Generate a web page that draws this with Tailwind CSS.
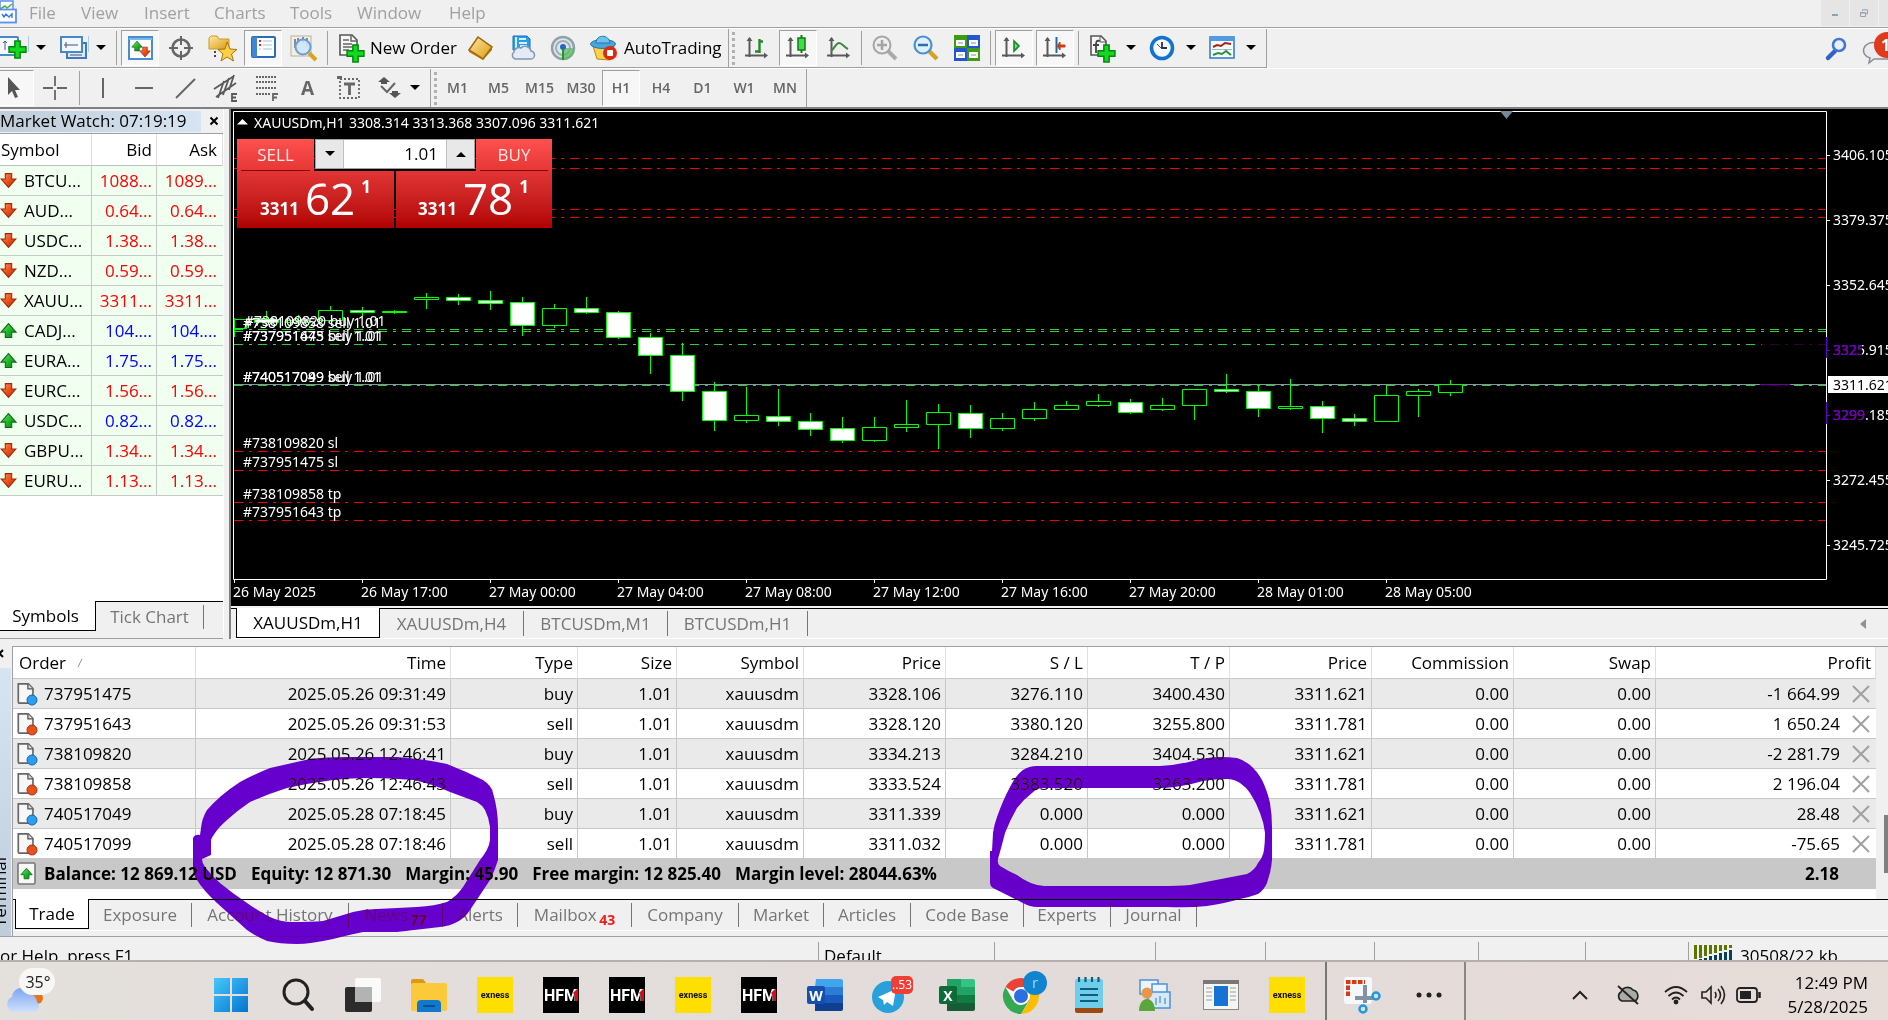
<!DOCTYPE html>
<html lang="en">
<head>
<meta charset="utf-8">
<title>XAUUSDm,H1</title>
<script src="https://cdn.jsdelivr.net/npm/@tailwindcss/browser@4"></script>
</head>
<body class="relative flex h-screen flex-col overflow-hidden bg-[#f0f0f0] font-['Open_Sans','Noto_Sans',sans-serif] text-[17px] leading-6 text-black">

<svg class="absolute h-0 w-0" aria-hidden="true">
  <defs>
    <linearGradient id="gGold" x1="0" y1="0" x2="1" y2="1"><stop offset="0" stop-color="#ffe9a0"/><stop offset="1" stop-color="#d99a13"/></linearGradient>
    <linearGradient id="gWin" x1="0" y1="0" x2="1" y2="1"><stop offset="0" stop-color="#45c8fb"/><stop offset="1" stop-color="#0573d0"/></linearGradient>
    <linearGradient id="gCloud" x1="0" y1="0" x2="0" y2="1"><stop offset="0" stop-color="#7fa6f3"/><stop offset="1" stop-color="#cfe0fb"/></linearGradient>
    <linearGradient id="gRed" x1="0" y1="0" x2="1" y2="1"><stop offset="0" stop-color="#ff9a66"/><stop offset=".5" stop-color="#ea4f1c"/><stop offset="1" stop-color="#b93208"/></linearGradient>
    <linearGradient id="gGreen" x1="0" y1="0" x2="1" y2="1"><stop offset="0" stop-color="#7be87b"/><stop offset=".5" stop-color="#25b52c"/><stop offset="1" stop-color="#0a7d12"/></linearGradient>
    <symbol id="down" viewBox="0 0 16 16"><path d="M5 1.500h6v5h4L8 14.500 1 6.500h4z" fill="url(#gRed)" stroke="#9c2c08"/></symbol>
    <symbol id="up" viewBox="0 0 16 16"><path d="M5 14.500h6v-5h4L8 1.500 1 9.500h4z" fill="url(#gGreen)" stroke="#0a6d10"/></symbol>
    <symbol id="doc" viewBox="0 0 24 26"><path d="M2.500 2h11l5 5v16H4q-1.500 0-1.500-1.500z" fill="#f7f7f7" stroke="#666" stroke-width="1.800"/><path d="M13 2v5.500h5.500" fill="#ddd" stroke="#555" stroke-width="1.400"/></symbol>
    <symbol id="plus" viewBox="0 0 18 18"><path d="M6.500 1h5v5.500H17v5h-5.500V17h-5v-5.500H1v-5h5.500z" fill="#12d921" stroke="#05860d" stroke-width="1.400"/></symbol>
    <symbol id="axes" viewBox="0 0 26 26"><path d="M5.500 3v19M1 20.500h20" stroke="#5a5a5a" stroke-width="2" fill="none"/><path d="M2.500 6l3-4 3 4zM20 17.500l4 3-4 3z" fill="#5a5a5a"/></symbol>
    <symbol id="exness" viewBox="0 0 36 36"><rect width="36" height="36" fill="#ffde02"/><text x="18" y="20.500" font-size="9" font-weight="700" text-anchor="middle" fill="#111" font-family="Roboto, sans-serif">exness</text></symbol>
    <symbol id="hfm" viewBox="0 0 36 36"><rect width="36" height="36" fill="#000"/><text x="18" y="23.500" font-size="16" font-weight="700" text-anchor="middle" fill="#fff" font-family="Roboto, sans-serif">HFM</text><path d="M30 16l4-4h1v12h-3v-6z" fill="#e00613"/></symbol>
  </defs>
</svg>

<!-- Menu bar -->
<header class="flex h-7 shrink-0 items-center border-b border-[#a0a0a0] text-[#a0a0a0]">
  <svg class="h-7 w-[29px] shrink-0" viewBox="0 0 29 28" aria-hidden="true"><rect x="0" y="1" width="13" height="9" fill="#fff" stroke="#5b8ff0" stroke-width="1.500"/><path d="M0 9l5-3 2 2 5-4" stroke="#3fae4a" fill="none" stroke-width="1.500"/><rect x="-2" y="9.500" width="18" height="13" fill="#fff" stroke="#5b8ff0" stroke-width="1.800"/><path d="M2 14l2 3 2-3 3 3 3-3v4" stroke="#3b77e8" fill="none" stroke-width="1.400"/></svg>
  <nav class="flex flex-1 items-center pb-0.5">
    <a href="#" class="w-[52px]">File</a><a href="#" class="w-[63px]">View</a><a href="#" class="w-[70px]">Insert</a><a href="#" class="w-[76px]">Charts</a><a href="#" class="w-[67px]">Tools</a><a href="#" class="w-[92px]">Window</a><a href="#">Help</a>
  </nav>
  <div class="flex gap-px self-start">
    <button aria-label="Minimize" class="flex h-[26px] w-7 items-center justify-center bg-[#e5e5e5]"><span class="mt-1 h-0.5 w-1.5 bg-[#93a1b0]"></span></button>
    <button aria-label="Restore" class="flex h-[26px] w-7 items-center justify-center bg-[#e5e5e5]"><svg width="8" height="8" viewBox="0 0 8 8" fill="none" stroke="#93a1b0"><path d="M2.500 2V.8H7.500v4H6M.5 3.500h5v4h-5zM.5 4h5" /></svg></button>
    <button aria-label="Close" class="h-[26px] w-[9px] bg-[#e5e5e5]"></button>
  </div>
</header>

<!-- Standard toolbar -->
<div class="flex h-10 shrink-0 items-stretch justify-between border-t border-white">
  <div class="flex items-center border-r border-b border-[#a0a0a0] pr-1">
    <button aria-label="New chart" class="flex w-[53px] items-center"><svg width="31" height="28" viewBox="0 0 31 28"><rect x="-4" y="3" width="22" height="18" rx="1" fill="#f4f9ff" stroke="#4a86c8" stroke-width="2"/><path d="M5 7v9M3 9l2-2 2 2M8 14h6" stroke="#557" fill="none"/><use href="#plus" x="8" y="6" width="19" height="19"/><path d="M28.500 2v16" stroke="#a9cdf0"/></svg><svg width="20" height="10" viewBox="0 0 20 10"><path d="M5 2h10l-5 5z"/></svg></button>
    <button aria-label="Profiles" class="flex w-[60px] items-center"><svg width="38" height="28" viewBox="0 0 38 28"><rect x="14" y="9" width="19" height="15" fill="#dcebfb" stroke="#3f79bb" stroke-width="2"/><rect x="8" y="3" width="21" height="15" fill="#f3f8ff" stroke="#4a86c8" stroke-width="2"/><path d="M11 11h14M13 8v6M17 21h12" stroke="#456" fill="none"/><path d="M35.500 2v16" stroke="#a9cdf0"/></svg><svg width="20" height="10" viewBox="0 0 20 10"><path d="M5 2h10l-5 5z"/></svg></button>
    <span class="mr-1 ml-[3px] h-[34px] w-px bg-[#a0a0a0]"></span>
    <div class="flex gap-[3px]">
      <button aria-label="Market Watch" class="flex h-[36px] w-[38px] items-center justify-center border border-t-[#a0a0a0] border-r-white border-b-white border-l-[#a0a0a0] bg-[#f7f7f7]"><svg width="28" height="28" viewBox="0 0 28 28"><rect x="3" y="3" width="23" height="22" fill="#fff" stroke="#4a8cd0" stroke-width="2"/><path d="M3 5h23" stroke="#7ab8ee" stroke-width="2"/><use href="#up" x="5" y="6" width="12" height="12"/><use href="#down" x="13" y="12" width="12" height="12"/></svg></button>
      <button aria-label="Data Window" class="flex h-[36px] w-[38px] items-center justify-center"><svg width="28" height="28" viewBox="0 0 28 28" fill="none" stroke="#666"><circle cx="14" cy="14" r="8.500" stroke-width="2.600"/><path d="M14 2v9M14 17v9M2 14h9M17 14h9" stroke-width="2"/></svg></button>
      <button aria-label="Navigator" class="flex h-[36px] w-[38px] items-center justify-center"><svg width="30" height="28" viewBox="0 0 30 28"><path d="M2 4l2-2h6l2 3h10v10H2z" fill="url(#gGold)" stroke="#c99b2b"/><path d="M8 17v8" stroke="#444" stroke-width="2" stroke-dasharray="2 2"/><path d="M20 8l3 7 7 .5-5.500 4.500 2 7L20 23l-6 4 2-7-5-4.500 7-.5z" fill="#fccf45" stroke="#a9760a"/></svg></button>
      <button aria-label="Terminal" class="flex h-[36px] w-[38px] items-center justify-center border border-t-[#a0a0a0] border-r-white border-b-white border-l-[#a0a0a0] bg-[#f7f7f7]"><svg width="28" height="28" viewBox="0 0 28 28"><rect x="3" y="3" width="23" height="20" rx="1" fill="#fff" stroke="#2e6bb5" stroke-width="2"/><rect x="3" y="3" width="5" height="20" fill="#3f86d6"/><path d="M10 7h2M10 11h2" stroke="#d22" stroke-width="2"/><path d="M14 7h9M14 11h9M14 15h9M10 15h2" stroke="#c3d5ea" stroke-width="1.500"/></svg></button>
      <button aria-label="Strategy Tester" class="flex h-[36px] w-[38px] items-center justify-center"><svg width="30" height="28" viewBox="0 0 30 28"><rect x="2" y="2" width="20" height="20" fill="#f3efe2" stroke="#b9b29a"/><path d="M6 5v9M9 4v7M14 3v6M18 4v9" stroke="#667" stroke-width="1.500"/><circle cx="14" cy="13" r="7.500" fill="#cfe6fa" fill-opacity=".9" stroke="#6aa0d8" stroke-width="2"/><path d="M20 19l7 7" stroke="#d9a520" stroke-width="4"/></svg></button>
    </div>
    <span class="mx-1 h-[34px] w-px bg-[#a0a0a0]"></span>
    <button class="flex h-9 w-[129px] items-center gap-[5px] pl-1 text-left"><svg width="29" height="30" viewBox="0 0 29 30" class="shrink-0"><path d="M4 2h12l5 5v15H4z" fill="#f6f6f6" stroke="#555" stroke-width="1.600"/><path d="M15 2v6h6M7 7h6M7 11h9M7 14h9M7 17h6" stroke="#666" stroke-width="1.500" fill="none"/><use href="#plus" x="10" y="11" width="19" height="19"/></svg><span>New Order</span></button>
    <div class="flex gap-[3px] pl-px">
      <button aria-label="MetaEditor" class="flex h-9 w-[38px] items-center justify-center"><svg width="28" height="28" viewBox="0 0 28 28"><path d="M2 16L11 3l14 10-9 12z" fill="url(#gGold)" stroke="#99650a" stroke-width="1.500"/><path d="M2 16l14 9 9-12v3L16 26 2 18z" fill="#b37409"/></svg></button>
      <button aria-label="Cloud" class="flex h-9 w-[38px] items-center justify-center"><svg width="28" height="28" viewBox="0 0 28 28"><path d="M5 2h14l3 3v11H5z" fill="#299df0" stroke="#1a6fc0"/><path d="M11 5h7M11 9h8M8 3v12M12 12h7" stroke="#d8efff" stroke-width="2"/><path d="M7 25h15a4 4 0 0 0 1-8 6 6 0 0 0-10-3 5 5 0 0 0-7 4 4 4 0 0 0 1 7z" fill="#e3ebf5" stroke="#7f97b7" stroke-width="1.500"/></svg></button>
      <button aria-label="Signals" class="flex h-9 w-[38px] items-center justify-center"><svg width="28" height="28" viewBox="0 0 28 28" fill="none"><circle cx="14" cy="14" r="11" fill="#dfe5e8" stroke="#8fa3ab" stroke-width="2.500"/><circle cx="14" cy="14" r="7" stroke="#9eb0b8" stroke-width="2"/><path d="M14 14v12a11 11 0 0 0 11-12" fill="#57bb5c" fill-opacity=".7"/><circle cx="14" cy="13" r="3" fill="#2766c4"/><path d="M14 15v11" stroke="#21962a" stroke-width="2"/></svg></button>
    </div>
    <button class="ml-[3px] flex h-9 w-[143px] items-center gap-[5px] pl-1"><svg width="30" height="28" viewBox="0 0 30 28" class="shrink-0"><path d="M4 12l4 13 13 1 4-14z" fill="#fbd24e" stroke="#b98711"/><ellipse cx="14" cy="10" rx="12.500" ry="4.500" fill="#4aa5d8" stroke="#2776a8"/><path d="M7 9c0-9 13-9 14 0z" fill="#6fc0ea" stroke="#2776a8"/><circle cx="21" cy="19" r="7" fill="#dd2a12"/><rect x="18" y="16" width="6" height="6" rx="1" fill="#fff"/></svg><span>AutoTrading</span></button>
    <span class="h-[38px] w-px bg-[#a0a0a0]"></span>
    <span class="mx-[3px] h-[33px] border-l-[3px] border-dotted border-[#b0b0b0]"></span>
    <div class="flex gap-[3px]">
      <button aria-label="Bar chart" class="flex h-9 w-[38px] items-center justify-center"><svg width="26" height="26" viewBox="0 0 26 26"><use href="#axes" width="26" height="26"/><path d="M15.500 4v14M11 16.500h4.500M15.500 6.500H19" stroke="#1f8a2a" stroke-width="2.400"/></svg></button>
      <button aria-label="Candlesticks" class="flex h-[36px] w-[38px] items-center justify-center border border-t-[#a0a0a0] border-r-white border-b-white border-l-[#a0a0a0] bg-[#f7f7f7]"><svg width="26" height="26" viewBox="0 0 26 26"><use href="#axes" width="26" height="26"/><path d="M16.500 0v18" stroke="#127a1a" stroke-width="2"/><rect x="13" y="3" width="7" height="12" fill="#3be04a" stroke="#127a1a" stroke-width="1.500"/></svg></button>
      <button aria-label="Line chart" class="flex h-9 w-[38px] items-center justify-center"><svg width="26" height="26" viewBox="0 0 26 26"><use href="#axes" width="26" height="26"/><path d="M5 16c4-3 5-8 8-8s5 4 9 6" stroke="#3a8a42" stroke-width="2" fill="none"/></svg></button>
    </div>
    <span class="mr-1 ml-[3px] h-[34px] w-px bg-[#a0a0a0]"></span>
    <div class="flex gap-[3px]">
      <button aria-label="Zoom in" class="flex h-9 w-[38px] items-center justify-center"><svg width="28" height="28" viewBox="0 0 28 28"><path d="M17 17l8 8" stroke="#aaa" stroke-width="4"/><circle cx="11" cy="11" r="8.500" fill="#eee" stroke="#a5a5a5" stroke-width="2"/><path d="M6 11h10M11 6v10" stroke="#a5a5a5" stroke-width="2.500"/></svg></button>
      <button aria-label="Zoom out" class="flex h-9 w-[38px] items-center justify-center"><svg width="28" height="28" viewBox="0 0 28 28"><path d="M17 17l8 8" stroke="#d8a31e" stroke-width="4.500"/><circle cx="11" cy="11" r="8.500" fill="#dff0fd" stroke="#4a90d4" stroke-width="2.200"/><path d="M6 11h10" stroke="#2a70a8" stroke-width="2.500"/></svg></button>
      <button aria-label="Tile windows" class="flex h-9 w-[38px] items-center justify-center"><svg width="26" height="26" viewBox="0 0 26 26"><path d="M0 0h13v13H0zM13 13h13v13H13z" fill="#3f9a14"/><path d="M13 0h13v13H13zM0 13h13v13H0z" fill="#2456cf"/><path d="M2 5h9v6H2zM15 5h9v6h-9zM2 17h9v6H2zM15 17h9v6h-9z" fill="#fff"/><path d="M4 8h5M17 8h5M4 20h5M17 20h5" stroke="#88a"/></svg></button>
    </div>
    <span class="mx-1 h-[34px] w-px bg-[#a0a0a0]"></span>
    <div class="flex gap-[3px]">
      <button aria-label="Auto scroll" class="flex h-[36px] w-[38px] items-center justify-center border border-t-[#a0a0a0] border-r-white border-b-white border-l-[#a0a0a0] bg-[#f7f7f7]"><svg width="26" height="26" viewBox="0 0 26 26"><use href="#axes" width="26" height="26"/><path d="M13 6l5 5-5 5z" fill="#6fe07a" stroke="#168a22" stroke-width="1.600"/></svg></button>
      <button aria-label="Chart shift" class="flex h-[36px] w-[38px] items-center justify-center border border-t-[#a0a0a0] border-r-white border-b-white border-l-[#a0a0a0] bg-[#f7f7f7]"><svg width="26" height="26" viewBox="0 0 26 26"><use href="#axes" width="26" height="26"/><path d="M14.500 2v16" stroke="#1d6ca8" stroke-width="2"/><path d="M23 10v2h-5v3l-3-4 3-4v3z" fill="#cc3d12" stroke="#cc3d12"/></svg></button>
    </div>
    <span class="mx-1 h-[34px] w-px bg-[#a0a0a0]"></span>
    <button aria-label="Indicators" class="flex w-[59px] items-center"><svg width="37" height="30" viewBox="0 0 37 30"><path d="M8 3h10l5 5v14H8z" fill="#f6f6f6" stroke="#555" stroke-width="1.600"/><path d="M17 3v6h6" stroke="#555" fill="none"/><path d="M17 8c-4-1-4 1-4 5v7M10 12h6" stroke="#444" stroke-width="1.800" fill="none"/><use href="#plus" x="14" y="11" width="19" height="19"/></svg><svg width="20" height="10" viewBox="0 0 20 10"><path d="M6 2h10l-5 5z"/></svg></button>
    <button aria-label="Periods" class="flex w-[60px] items-center"><svg width="38" height="28" viewBox="0 0 38 28"><circle cx="20" cy="14" r="10.500" fill="#f4f9ff" stroke="#1273cf" stroke-width="3.600"/><path d="M20 8v6h5" stroke="#333" stroke-width="1.800" fill="none"/><path d="M15 10l4 4" stroke="#555"/></svg><svg width="20" height="10" viewBox="0 0 20 10"><path d="M6 2h10l-5 5z"/></svg></button>
    <button aria-label="Templates" class="flex w-[60px] items-center"><svg width="38" height="28" viewBox="0 0 38 28"><rect x="8" y="3" width="24" height="21" fill="#f5fbff" stroke="#3b7fc8" stroke-width="1.600"/><rect x="8" y="3" width="24" height="4" fill="#4f9be6"/><path d="M11 13l4-2 4 1 4-3 6 1" stroke="#a8221a" stroke-width="2" fill="none"/><path d="M10 15.500h20" stroke="#9bc"/><path d="M11 21l5-2 4 1 4-3 5 4" stroke="#2a8f3a" stroke-width="2" fill="none"/></svg><svg width="20" height="10" viewBox="0 0 20 10"><path d="M6 2h10l-5 5z"/></svg></button>
  </div>
  <div class="flex items-center">
    <button aria-label="Search"><svg width="38" height="28" viewBox="0 0 38 28"><path d="M12 15l-8 8" stroke="#2f62c4" stroke-width="4.500" stroke-linecap="round"/><circle cx="15" cy="10" r="6" fill="#e8f0fc" stroke="#4577d2" stroke-width="2.600"/></svg></button>
    <button aria-label="Notifications: 1"><svg width="26" height="34" viewBox="0 0 26 34"><path d="M14 11a9 7.500 0 1 0-6 15l-1 5 5-4h14V11z" fill="#ececf0" stroke="#8b8b92" stroke-width="1.500"/><circle cx="25" cy="13" r="13" fill="#df3a1e"/><text x="19" y="19" font-size="16" font-weight="700" fill="#fff">1</text></svg></button>
  </div>
</div>

<!-- Drawing and timeframe toolbar -->
<div class="flex h-[41px] shrink-0 items-center border-t border-b-2 border-t-white border-b-[#808080]">
  <div class="flex h-[38px] items-center border-r border-[#a0a0a0]">
    <button aria-label="Cursor" class="flex h-9 w-[34px] items-center border border-l-0 border-t-[#a0a0a0] border-r-white border-b-white bg-[#f7f7f7]"><svg width="26" height="26" viewBox="0 0 26 26"><path d="M8 2v18l4-4 3 7 3-1-3-7h5z" fill="#555"/></svg></button>
    <button aria-label="Crosshair" class="flex h-9 w-[42px] items-center justify-center"><svg width="24" height="24" viewBox="0 0 24 24"><path d="M12 0v10M12 14v10M0 12h10M14 12h10" stroke="#666" stroke-width="1.800"/></svg></button>
    <span class="mr-0.5 ml-[3px] h-[34px] w-px bg-[#a0a0a0]"></span>
    <button aria-label="Vertical line" class="flex h-9 w-[41px] items-center justify-center"><svg width="24" height="24" viewBox="0 0 24 24"><path d="M12 2v20" stroke="#666" stroke-width="2"/></svg></button>
    <button aria-label="Horizontal line" class="flex h-9 w-[41px] items-center justify-center"><svg width="24" height="24" viewBox="0 0 24 24"><path d="M3 12h18" stroke="#666" stroke-width="2"/></svg></button>
    <button aria-label="Trendline" class="flex h-9 w-[41px] items-center justify-center"><svg width="24" height="24" viewBox="0 0 24 24"><path d="M3 22L22 3" stroke="#666" stroke-width="2"/></svg></button>
    <button aria-label="Equidistant channel" class="flex h-9 w-[41px] items-center justify-center"><svg width="26" height="28" viewBox="0 0 26 28" fill="none" stroke="#5a5a5a" stroke-width="1.800"><path d="M1 15L21 2M3 23L23 9M5 24L11 7M10 21l6-17M16 16l5-15"/><path d="M24 20h-5v7h5M19 23.500h4" stroke-width="1.800"/></svg></button>
    <button aria-label="Fibonacci" class="flex h-9 w-[41px] items-center justify-center"><svg width="26" height="28" viewBox="0 0 26 28" fill="none" stroke="#666"><path d="M2 3h21M2 8h21M2 14h21M2 20h14" stroke-width="2" stroke-dasharray="2 1"/><path d="M24 20h-5v7M19 23.500h4" stroke-width="1.800"/></svg></button>
    <button aria-label="Text" class="flex h-9 w-[41px] items-center justify-center text-[19px] font-bold text-[#666]">A</button>
    <button aria-label="Text label" class="flex h-9 w-[41px] items-center justify-center"><svg width="24" height="24" viewBox="0 0 24 24" fill="none" stroke="#666"><rect x="3" y="3" width="19" height="19" stroke-width="1.800" stroke-dasharray="2 2"/><path d="M7 8h11M12.500 8v11" stroke-width="2.800"/><path d="M0 1.500h5" stroke-width="3"/></svg></button>
    <button aria-label="Arrows" class="flex h-9 w-[61px] items-center pl-[7px]"><svg width="26" height="26" viewBox="0 0 26 26"><path d="M8 2l6 5h-3v2H5V7H2zM19 23l-6-5h3v-2h6v2h3z" fill="#555"/><path d="M5 11l6 6 8-9" stroke="#666" stroke-width="2" fill="none"/></svg><svg width="20" height="10" viewBox="0 0 20 10" class="ml-[3px]"><path d="M5 2h10l-5 5z"/></svg></button>
  </div>
  <span class="ml-[3px] h-[33px] border-l-[3px] border-dotted border-[#b0b0b0]"></span>
  <div class="flex h-[38px] items-center border-r border-[#a0a0a0] pr-px text-[14px] font-semibold text-[#666]">
    <button class="h-9 w-[41px]">M1</button><button class="h-9 w-[41px]">M5</button><button class="h-9 w-[41px]">M15</button><button class="h-9 w-[42px]">M30</button><button class="h-9 w-[38px] border border-t-[#a0a0a0] border-r-white border-b-white border-l-[#a0a0a0] bg-[#f7f7f7]">H1</button><button class="h-9 w-[42px]">H4</button><button class="h-9 w-[41px]">D1</button><button class="h-9 w-[42px]">W1</button><button class="h-9 w-[40px]">MN</button>
  </div>
</div>

<!-- Workspace -->
<main class="flex min-h-0 flex-1">
  <section class="flex w-[224px] shrink-0 flex-col border-r border-white" aria-label="Market Watch">
    <div class="flex h-[25px] items-center justify-between border-b border-[#a0a0a0]">
      <h2 class="h-[21px] w-[201px] bg-linear-to-r from-[#bfcddb] to-[#d7e4f2] leading-[19px] whitespace-nowrap">Market Watch: 07:19:19</h2>
      <button aria-label="Close Market Watch" class="mr-1"><svg width="10" height="10" viewBox="0 0 10 10"><path d="M1.500 1.500l7 7M8.500 1.500l-7 7" stroke="#000" stroke-width="2"/></svg></button>
    </div>
    <div class="flex-1 bg-white">
      <table class="w-full table-fixed border-separate border-spacing-0">
        <colgroup><col class="w-[92px]"><col class="w-[65px]"><col></colgroup>
        <thead><tr class="h-8">
          <th class="border-r border-b border-[#e0e0e0] border-b-[#c0c0c0] p-0 pl-px text-left font-normal">Symbol</th>
          <th class="border-r border-b border-[#e0e0e0] border-b-[#c0c0c0] p-0 pr-1 text-right font-normal">Bid</th>
          <th class="border-r border-b border-[#e0e0e0] border-b-[#c0c0c0] p-0 pr-[5px] text-right font-normal">Ask</th>
        </tr></thead>
        <tbody id="watch"></tbody>
      </table>
    </div>
    <div class="flex h-[30px]">
      <button class="w-24 border-r border-b border-black bg-white pr-1 text-center">Symbols</button>
      <div class="flex flex-1 items-center border-t border-black text-[#757575]"><button class="w-[107px]">Tick Chart</button><span class="h-6 w-px bg-[#757575]"></span></div>
    </div>
    <div class="h-2 border-b border-[#a0a0a0]"></div>
  </section>

  <section class="ml-[5px] flex min-w-0 flex-1 flex-col border-l-2 border-[#808080]" aria-label="Chart">
    <div class="relative min-h-0 flex-1 bg-black">
      <svg class="absolute inset-0 h-full w-full" font-family="'Noto Sans',sans-serif" font-size="14" fill="#fff">
        <g transform="translate(-231,-109)">
          <g fill="none" stroke-width="1">
            <path d="M233.500 579.500V111.500H1826.500V579.500z" stroke="#fff"/>
            <path d="M1827 155.500h3M1827 220.500h3M1827 285.500h3M1827 350.500h3M1827 415.500h3M1827 480.500h3M1827 545.500h3M234.500 580v3M362.500 580v3M490.500 580v3M618.500 580v3M746.500 580v3M874.500 580v3M1002.500 580v3M1130.500 580v3M1258.500 580v3M1386.500 580v3" stroke="#fff"/>
            <path d="M234 158.500H1826M234 168.500H1826M234 209.500H1826M234 217.500H1826M234 451.500H1826M234 470.500H1826M234 502.500H1826M234 520.500H1826" stroke="#f00" stroke-dasharray="9 6 3 6"/>
            <path d="M234 329.500H1826M234 331.500H1826M234 344.500H1826M234 385.500H1826" stroke="#32cd32" stroke-dasharray="9 6 3 6"/>
            <path d="M234 384.500H1826" stroke="#8796a5"/>
            <g id="candles" stroke="#0f0"></g>
          </g>
          <path d="M1500 111h13l-6.500 8z" fill="#778899"/>
          <path d="M237 124.500l5.500-5.500 5.500 5.500z"/>
          <text x="254" y="128">XAUUSDm,H1</text><text x="349" y="128">3308.314 3313.368 3307.096 3311.621</text>
          <text x="245" y="326">#738109820 buy 1.01</text><text x="243" y="328">#738109858 sell 1.01</text>
          <text x="243" y="341">#737951475 buy 1.01</text><text x="243" y="341">#737951643 sell 1.01</text>
          <text x="243" y="382">#740517049 buy 1.01</text><text x="243" y="382">#740517099 sell 1.01</text>
          <text x="243" y="448">#738109820 sl</text><text x="243" y="467">#737951475 sl</text>
          <text x="243" y="499">#738109858 tp</text><text x="243" y="517">#737951643 tp</text>
          <text x="1833" y="160">3406.105</text><text x="1833" y="225">3379.375</text><text x="1833" y="290">3352.645</text><text x="1833" y="355">3325.915</text><text x="1833" y="420">3299.185</text><text x="1833" y="485">3272.455</text><text x="1833" y="550">3245.725</text>
          <rect x="1828" y="376" width="70" height="17"/><text x="1833" y="390" fill="#000">3311.621</text>
          <g id="times"></g>
        </g>
      </svg>
      <!-- One-click trading panel -->
      <div class="absolute top-[30px] left-[6px] grid w-[315px] grid-cols-[77px_1fr_76px] text-white">
        <button class="h-8 bg-linear-to-b from-[#ff5050] to-[#e63636] px-1 text-[#ffe8e8]"><span class="block h-full border-b border-[#8a0000] leading-[32px]">SELL</span></button>
        <div class="mx-px flex h-[30px] border border-[#a0a0a0] bg-white text-black">
          <button aria-label="Decrease volume" class="flex w-7 items-center justify-center border-r border-[#c0c0c0] bg-[#e8e8e8]"><svg width="10" height="6"><path d="M0 0h10L5 5z"/></svg></button>
          <input aria-label="Volume" value="1.01" class="w-0 flex-1 pr-2 text-right outline-none">
          <button aria-label="Increase volume" class="flex w-7 items-center justify-center border-l border-[#c0c0c0] bg-[#e8e8e8]"><svg width="10" height="6"><path d="M0 6h10L5 1z"/></svg></button>
        </div>
        <button class="h-8 bg-linear-to-b from-[#ff5050] to-[#e63636] px-1 text-[#ffe8e8]"><span class="block h-full border-b border-[#8a0000] leading-[32px]">BUY</span></button>
        <div class="col-span-3 flex gap-0.5">
          <button aria-label="Sell at 3311.621" class="flex h-[57px] flex-1 items-start bg-linear-to-b from-[#e23434] to-[#b00000] pl-[23px]"><span class="mt-[26px] font-bold">3311</span><span class="ml-1.5 text-[44px] leading-[54px]">62</span><span class="ml-1.5 mt-1 font-bold">1</span></button>
          <button aria-label="Buy at 3311.781" class="flex h-[57px] flex-1 items-start bg-linear-to-b from-[#e23434] to-[#b00000] pl-[22px]"><span class="mt-[26px] font-bold">3311</span><span class="ml-1.5 text-[44px] leading-[54px]">78</span><span class="ml-1.5 mt-1 font-bold">1</span></button>
        </div>
      </div>
    </div>
    <nav class="mt-0.5 flex h-[30px] border-t border-black text-center text-[#757575]">
      <a href="#" class="-mt-px ml-[5px] h-[30px] w-[144px] border-x border-b border-black bg-white leading-[30px] text-black">XAUUSDm,H1</a>
      <a href="#" class="my-0.5 w-[144px] border-r border-[#757575] leading-[26px]">XAUUSDm,H4</a>
      <a href="#" class="my-0.5 w-[144px] border-r border-[#757575] leading-[26px]">BTCUSDm,M1</a>
      <a href="#" class="my-0.5 w-[140px] border-r border-[#757575] leading-[26px]">BTCUSDm,H1</a>
      <button aria-label="Scroll tabs left" class="mr-[22px] ml-auto self-center"><svg width="6" height="10"><path d="M6 0v10L0 5z" fill="#909090"/></svg></button>
    </nav>
    <div class="h-px bg-white"></div>
  </section>
</main>

<!-- Terminal -->
<section class="mt-[7px] flex shrink-0" aria-label="Terminal">
  <div class="flex w-3 shrink-0 flex-col">
    <button aria-label="Close Terminal" class="h-[22px]"><svg width="6" height="10" class="mb-2"><path d="M-4 2l7 7M3 2l-7 7" stroke="#000" stroke-width="2"/></svg></button>
    <svg class="w-[11px] flex-1 bg-linear-to-b from-[#d7e4f2] to-[#bfcddb]"><text transform="translate(6,259) rotate(-90)" font-size="17" font-weight="500">Terminal</text></svg>
  </div>
  <div class="flex min-w-0 flex-1 flex-col border-l border-[#a0a0a0]">
    <div class="flex h-[254px] border-t border-b border-t-[#a0a0a0] border-b-black bg-white">
      <div class="min-w-0 flex-1">
        <table class="w-full table-fixed border-separate border-spacing-0 whitespace-nowrap">
          <colgroup><col class="w-[183px]"><col class="w-[255px]"><col class="w-[127px]"><col class="w-[99px]"><col class="w-[127px]"><col class="w-[142px]"><col class="w-[142px]"><col class="w-[142px]"><col class="w-[142px]"><col class="w-[142px]"><col class="w-[142px]"><col></colgroup>
          <thead><tr id="heads" class="h-8"></tr></thead>
          <tbody id="orders"></tbody>
          <tfoot><tr class="h-[30px] bg-[#c8c8c8] font-bold">
            <td colspan="11" class="p-0"><div class="flex items-center pl-1"><svg width="19" height="24" viewBox="0 0 19 24" class="mr-2"><rect x="1" y="1" width="17" height="21" rx="1.500" fill="#f7f7f7" stroke="#777" stroke-width="1.600"/><use href="#up" x="3" y="5" width="13" height="13"/></svg><div class="flex gap-[14px]"><span>Balance: 12 869.12 USD</span><span>Equity: 12 871.30</span><span>Margin: 45.90</span><span>Free margin: 12 825.40</span><span>Margin level: 28044.63%</span></div></div></td>
            <td class="p-0 pr-[37px] text-right">2.18</td>
          </tr></tfoot>
        </table>
      </div>
      <div class="flex w-3 flex-col items-end bg-[#f0f0f0]"><div class="mt-[168px] h-[58px] w-1 bg-[#808080]"></div></div>
    </div>
    <nav class="flex h-[30px] text-center whitespace-nowrap text-[#757575]">
      <a href="#" class="-mt-px ml-0.5 h-[30px] w-[74px] border-x border-b border-black bg-white leading-[30px] text-black">Trade</a>
      <a href="#" class="my-[3px] w-[103px] border-r border-[#757575]">Exposure</a>
      <a href="#" class="my-[3px] w-[157px] border-r border-[#757575]">Account History</a>
      <a href="#" class="my-[3px] w-[94px] border-r border-[#757575]">News <b class="relative top-1 -ml-0.5 text-[14px] text-[#f01c1c]">77</b></a>
      <a href="#" class="my-[3px] w-[75px] border-r border-[#757575]">Alerts</a>
      <a href="#" class="my-[3px] w-[114px] border-r border-[#757575]">Mailbox <b class="relative top-1 -ml-0.5 text-[14px] text-[#f01c1c]">43</b></a>
      <a href="#" class="my-[3px] w-[107px] border-r border-[#757575]">Company</a>
      <a href="#" class="my-[3px] w-[85px] border-r border-[#757575]">Market</a>
      <a href="#" class="my-[3px] w-[87px] border-r border-[#757575]">Articles</a>
      <a href="#" class="my-[3px] w-[113px] border-r border-[#757575]">Code Base</a>
      <a href="#" class="my-[3px] w-[87px] border-r border-[#757575]">Experts</a>
      <a href="#" class="my-[3px] w-[86px] border-r border-[#757575]">Journal</a>
    </nav>
    <div class="h-[6px] border-t border-white"></div>
  </div>
</section>

<!-- Status bar -->
<div class="flex h-6 shrink-0 items-start overflow-hidden border-t border-[#a0a0a0] pt-[5px] leading-7">
  <span class="h-7 flex-1 border-r border-[#a0a0a0]">or Help, press F1</span>
  <span class="h-7 w-[176px] border-r border-[#a0a0a0] pl-[5px]">Default</span>
  <span class="h-7 w-[161px] border-r border-[#a0a0a0]"></span><span class="h-7 w-[110px] border-r border-[#a0a0a0]"></span><span class="h-7 w-[109px] border-r border-[#a0a0a0]"></span><span class="h-7 w-[104px] border-r border-[#a0a0a0]"></span><span class="h-7 w-[107px] border-r border-[#a0a0a0]"></span><span class="h-7 w-[103px] border-r border-[#a0a0a0]"></span>
  <span class="flex h-7 w-[199px] gap-[7px] pl-[5px]"><svg width="39" height="20" viewBox="0 0 39 20" class="mt-[3px] shrink-0"><path d="M1.500 0v14M6.500 0v13M11.500 0v11M16.500 0v9M21.500 0v8M26.500 0v6M31.500 0v5M36.500 0v3" stroke="#5c7500" stroke-width="3"/><path d="M6.500 14v6M11.500 13v7M16.500 11v9M21.500 10v10M26.500 8v12M31.500 7v13M36.500 5v15" stroke="#0a4056" stroke-width="3"/></svg><span>30508/22 kb</span></span>
</div>

<!-- Taskbar -->
<footer class="flex h-[60px] shrink-0 items-center border-t-2 border-[#b5b0ae] bg-linear-to-r from-[#e4e0dc] from-0% via-[#e2dbda] via-50% to-[#e6dcd8] to-100%">
  <button aria-label="Weather" class="h-[58px] w-[198px]"><svg width="60" height="58" viewBox="0 0 60 58"><circle cx="37" cy="36" r="6" fill="#e8731a"/><path d="M13 50a8 8 0 0 1-1-15 9 9 0 0 1 17-4 10 10 0 0 1 8 9 6 6 0 0 1-2 10z" fill="url(#gCloud)"/><rect x="19" y="6" width="36" height="27" rx="13.500" fill="#f7f7f6"/><text x="38" y="26" font-size="16" text-anchor="middle" fill="#222">35°</text></svg></button>
  <div class="flex items-center pt-2">
  <button aria-label="Start" class="flex w-[66px] justify-center"><svg width="36" height="36" viewBox="0 0 36 36"><path d="M1 1h16v16H1zM19 1h16v16H19zM1 19h16v16H1zM19 19h16v16H19z" fill="url(#gWin)"/></svg></button>
  <button aria-label="Search" class="flex w-[66px] justify-center"><svg width="36" height="36" viewBox="0 0 36 36" fill="none" stroke="#222" stroke-linecap="round"><circle cx="17" cy="15" r="12" stroke-width="3"/><path d="M26 24l7 8" stroke-width="4"/></svg></button>
  <button aria-label="Task view" class="flex w-[66px] justify-center"><svg width="38" height="36" viewBox="0 0 38 36"><rect x="1" y="10" width="27" height="25" rx="2" fill="#2b2b2b"/><rect x="11" y="1" width="26" height="24" rx="2" fill="#fafafa"/><path d="M11 10h17v15H11z" fill="#b3b3b3"/></svg></button>
  <button aria-label="File Explorer" class="flex w-[66px] justify-center"><svg width="38" height="36" viewBox="0 0 38 36"><path d="M1 4q0-2 2-2h10l4 5H1z" fill="#dc9a0c"/><rect x="1" y="6" width="36" height="28" rx="2" fill="#fcc93a"/><path d="M7 35V27q0-4 4-4h16q4 0 4 4v8z" fill="#1278cc"/><path d="M13 29h12" stroke="#0a4f94" stroke-width="2"/></svg></button>
  <button aria-label="Exness" class="flex w-[66px] justify-center"><svg width="36" height="36"><use href="#exness" width="36" height="36"/></svg></button>
  <button aria-label="HFM" class="flex w-[66px] justify-center"><svg width="36" height="36"><use href="#hfm" width="36" height="36"/></svg></button>
  <button aria-label="HFM" class="flex w-[66px] justify-center"><svg width="36" height="36"><use href="#hfm" width="36" height="36"/></svg></button>
  <button aria-label="Exness" class="flex w-[66px] justify-center"><svg width="36" height="36"><use href="#exness" width="36" height="36"/></svg></button>
  <button aria-label="HFM" class="flex w-[66px] justify-center"><svg width="36" height="36"><use href="#hfm" width="36" height="36"/></svg></button>
  <button aria-label="Word" class="flex w-[66px] justify-center"><svg width="36" height="34" viewBox="0 0 36 34"><path d="M9 1h25q2 0 2 2v6H8z" fill="#41a5ee"/><path d="M8 9h28v8H8z" fill="#2b7cd3"/><path d="M8 17h28v8H8z" fill="#185abd"/><path d="M8 25h28v6q0 2-2 2H8z" fill="#103f91"/><rect y="8" width="18" height="18" rx="2" fill="#1550b0"/><text x="9" y="22.500" font-size="14" font-weight="700" fill="#fff" text-anchor="middle">W</text></svg></button>
  <button aria-label="Telegram" class="flex w-[66px] justify-center pb-1"><svg width="46" height="44" viewBox="0 0 46 44"><circle cx="20" cy="26" r="16" fill="#27a0dc"/><path d="M10 26l18-8-3 17-6-4-3 3-1-5z" fill="#fff"/><rect x="23" y="5" width="22" height="18" rx="5" fill="#f03e36"/><text x="34" y="18" font-size="12" fill="#fff" text-anchor="middle">..53</text></svg></button>
  <button aria-label="Excel" class="flex w-[66px] justify-center"><svg width="36" height="34" viewBox="0 0 36 34"><path d="M8 1h14v16H8z" fill="#21a366"/><path d="M22 1h12q2 0 2 2v6H22z" fill="#33c481"/><path d="M22 9h14v8H22z" fill="#21a366"/><path d="M8 17h28v8H8z" fill="#107c41"/><path d="M8 25h28v6q0 2-2 2H8z" fill="#185c37"/><rect y="8" width="18" height="18" rx="2" fill="#0d6b38"/><text x="9" y="22.500" font-size="14" font-weight="700" fill="#fff" text-anchor="middle">X</text></svg></button>
  <button aria-label="Chrome" class="flex w-[66px] justify-center pb-2"><svg width="48" height="50" viewBox="0 0 48 50"><circle cx="22" cy="30" r="18" fill="#fff"/><path d="M22 30L6.400 21A18 18 0 0 1 37.600 21H22z" fill="#ea4335"/><path d="M22 30l15.600-9A18 18 0 0 1 22 48l8-13z" fill="#fbbc04"/><path d="M22 30l8 4.600L22 48A18 18 0 0 1 6.400 21L14 34z" fill="#34a853"/><circle cx="22" cy="30" r="9" fill="#fff"/><circle cx="22" cy="30" r="7" fill="#2b6fe0"/><circle cx="36" cy="17" r="12" fill="#1283cf"/><text x="36" y="22" font-size="15" fill="#9fd8ff" text-anchor="middle">r</text></svg></button>
  <button aria-label="Notepad" class="flex w-[66px] justify-center"><svg width="30" height="38" viewBox="0 0 30 38"><rect x="1" y="3" width="28" height="31" rx="2" fill="#6dcdeb"/><path d="M1 32h28v3q0 2-2 2H3q-2 0-2-2z" fill="#9c4a12"/><path d="M5 1v5M11.500 1v5M18 1v5M24.500 1v5M6 13h18M6 19h18M6 25h18" stroke="#125c77" stroke-width="2.200"/></svg></button>
  <button aria-label="Trading app" class="flex w-[66px] justify-center"><svg width="34" height="34" viewBox="0 0 34 34"><rect x="2" y="2" width="18" height="14" fill="#eaf4ff" stroke="#4d90d8" stroke-width="1.500"/><rect x="14" y="6" width="15" height="14" fill="#eaf4ff" stroke="#4d90d8" stroke-width="1.500"/><rect x="10" y="14" width="22" height="16" fill="#d6e9fb" stroke="#4d90d8" stroke-width="1.500"/><path d="M18 20v7M22 18v7M27 20v6" stroke="#37a"/><circle cx="9" cy="15" r="5.500" fill="#e9964a"/><path d="M1 33c0-16 16-16 16 0z" fill="#5ba63a"/></svg></button>
  <button aria-label="Window app" class="flex w-[66px] justify-center"><svg width="36" height="30" viewBox="0 0 36 30"><rect x=".5" y=".5" width="35" height="29" fill="#f5f5f5" stroke="#888"/><rect width="36" height="4" fill="#777"/><rect x="11" y="6" width="14" height="20" fill="#1672d3"/><path d="M3 8h6M3 12h6M3 16h6M3 20h6M27 8h6M27 12h6M27 16h6M27 20h6" stroke="#bbb" stroke-width="1.500"/></svg></button>
  <button aria-label="Exness" class="flex w-[66px] justify-center"><svg width="36" height="36"><use href="#exness" width="36" height="36"/></svg></button>
  </div>
  <span class="ml-[5px] h-full w-0.5 bg-[#777]"></span>
  <div class="flex items-center pt-2">
  <button aria-label="Snipping Tool" class="flex w-[69px] justify-center"><svg width="40" height="38" viewBox="0 0 40 38"><rect x="2" y="1" width="28" height="27" rx="3" fill="#f6f7fa"/><path d="M6 20V6h17" fill="none" stroke="#d83b12" stroke-width="4" stroke-dasharray="4.500 1.500"/><path d="M23 9v18M13 22h19" stroke="#8292a2" stroke-width="4"/><circle cx="34" cy="20" r="3.500" fill="none" stroke="#1c9ae0" stroke-width="2.500"/><circle cx="21" cy="33" r="3.500" fill="none" stroke="#1c9ae0" stroke-width="2.500"/></svg></button>
  <button aria-label="More" class="flex w-[66px] justify-center"><svg width="26" height="6" viewBox="0 0 26 6" fill="#222"><circle cx="3" cy="3" r="2.500"/><circle cx="13" cy="3" r="2.500"/><circle cx="23" cy="3" r="2.500"/></svg></button>
  </div>
  <span class="ml-0.5 h-full w-0.5 bg-[#8a8684]"></span>
  <div class="ml-auto flex items-center pt-2 pr-5">
    <button aria-label="Show hidden icons" class="w-12"><svg width="18" height="12" viewBox="0 0 18 12" class="mx-auto"><path d="M2 10l7-7 7 7" fill="none" stroke="#222" stroke-width="2"/></svg></button>
    <button aria-label="OneDrive" class="w-12"><svg width="26" height="22" viewBox="0 0 26 22" class="mx-auto"><path d="M7 17a5 5 0 0 1-1-9 7 7 0 0 1 12-2 6 6 0 0 1 2 11z" fill="#aaa" stroke="#222" stroke-width="1.600"/><path d="M3 2l20 18" stroke="#222" stroke-width="1.800"/></svg></button>
    <button aria-label="Network" class="w-12"><svg width="24" height="20" viewBox="0 0 24 20" fill="none" stroke="#222" stroke-width="1.800" class="mx-auto"><path d="M1 7q11-10 22 0M4.500 11q7.500-7 15 0M8 14.500q4-4 8 0"/><circle cx="12" cy="17" r="1.500" fill="#222"/></svg></button>
    <button aria-label="Volume" class="w-[26px]"><svg width="26" height="22" viewBox="0 0 26 22" fill="none" stroke="#222" stroke-width="1.600"><path d="M2 8h4l5-5v16l-5-5H2zM15 8q2 3 0 6M18 5q5 6 0 12M21 2q7 9 0 18"/></svg></button>
    <button aria-label="Battery" class="w-[46px]"><svg width="26" height="16" viewBox="0 0 26 16" class="mx-auto"><rect x="1" y="1" width="20" height="14" rx="3" fill="none" stroke="#222" stroke-width="1.800"/><rect x="4" y="4" width="11" height="8" fill="#222"/><path d="M23.500 5v6" stroke="#222" stroke-width="2.500"/></svg></button>
    <time class="ml-1.5 w-[90px] text-right leading-6">12:49 PM<br>5/28/2025</time>
  </div>
</footer>

<!-- Freehand highlights -->
<svg class="pointer-events-none absolute inset-0 h-full w-full mix-blend-darken" fill="#6600cc" fill-rule="evenodd" aria-hidden="true">
  <path d="M193 838Q195 834 200 835L201 828Q202 818 207 810Q220 795 240 782Q255 774 270 768L310 759Q325 757 347 757L397 757Q425 759 447 764Q465 771 483 780Q492 786 493 793Q498 810 498 827V860Q495 870 490 880L470 910Q465 918 457 922Q450 926 440 927L397 932H363Q348 935 333 939Q310 944 297 944Q280 944 267 941Q257 937 247 930L217 903Q203 890 197 880Q193 875 193 867zM211 840V855L202 859Q202 863 205 867Q212 876 220 883Q232 893 247 903Q258 911 270 917Q280 922 293 922Q310 922 323 921Q340 916 353 912Q365 909 377 909L417 907Q435 906 447 902Q457 896 463 887L480 860Q489 849 490 840V827Q489 818 485 810Q482 805 477 802L450 792Q433 784 413 780Q390 778 370 778Q350 778 333 780Q310 783 287 788Q268 794 250 802Q238 810 227 820Q219 827 215 833Q212 837 211 840z"/>
  <path d="M990 851H992L993 833Q994 825 997 817Q1003 800 1010 787Q1016 775 1023 770Q1029 766 1037 766H1160Q1177 765 1193 761Q1208 757 1220 757Q1229 757 1237 758Q1244 760 1250 765Q1257 771 1262 780Q1267 790 1270 803Q1272 815 1272 827V860Q1271 872 1267 883Q1264 890 1258 894Q1250 897 1240 899Q1222 904 1207 906Q1190 908 1167 907H1037Q1030 907 1023 903L993 888Q990 886 990 883zM998 859Q997 863 1000 866Q1008 871 1017 875Q1030 885 1044 886H1160Q1178 886 1190 885L1247 874Q1255 870 1258 863Q1263 857 1264 850Q1265 842 1265 833Q1264 823 1260 813Q1256 802 1250 793Q1246 787 1240 783Q1234 779 1227 779Q1215 779 1203 781Q1182 787 1163 788H1043Q1037 788 1032 793Q1024 799 1017 808Q1010 820 1005 833Q1002 845 998 859z"/>
  <path d="M1763 337H1862V358H1790Q1780 366 1792 388H1760Q1758 360 1763 337zM1790 402H1866V424H1820Q1800 418 1790 402z"/>
</svg>

<script>
  const ns = 'http://www.w3.org/2000/svg';
  // [bodyTop, bodyBottom, wickTop, wickBottom, bearish], one candle every 32px
  const candles = [[319,328,318,336,0],[319,322,311,323,1],[320,322,315,325,0],[310,320,306,320,0],[310,312,307,315,1],[311,312,310,313,0],[297,299,293,308,0],[297,300,294,304,1],[300,303,291,309,1],[302,325,297,335,1],[308,325,304,327,0],[308,312,297,313,1],[312,337,311,338,1],[337,355,333,373,1],[355,391,343,400,1],[391,420,382,430,1],[415,420,387,422,0],[416,421,389,425,1],[421,429,413,435,1],[428,440,417,442,1],[427,440,417,441,0],[424,427,400,431,0],[412,424,404,448,0],[413,428,405,437,1],[418,428,413,430,0],[409,418,402,420,0],[405,409,401,409,0],[401,405,394,406,0],[402,412,399,413,1],[405,409,398,410,0],[389,405,389,419,0],[389,391,374,392,1],[391,408,384,416,1],[406,408,379,409,0],[406,418,401,432,1],[418,421,414,425,1],[395,421,385,421,0],[391,395,389,416,0],[384,392,380,395,0]];
  const layer = document.getElementById('candles');
  candles.forEach(([t, b, h, l, bear], i) => {
    const x = 234 + i * 32;
    const wick = document.createElementNS(ns, 'path');
    wick.setAttribute('d', `M${x + .5} ${h}V${t}M${x + .5} ${b}V${l + 1}`);
    const body = document.createElementNS(ns, 'path');
    const left = i ? x - 12 : x;
    body.setAttribute('d', `M${left + .5} ${t + .5}H${x + 12.5}V${b + .5}H${left + .5}z`);
    body.setAttribute('fill', bear ? '#fff' : '#000');
    layer.append(wick, body);
  });
  ['26 May 2025','26 May 17:00','27 May 00:00','27 May 04:00','27 May 08:00','27 May 12:00','27 May 16:00','27 May 20:00','28 May 01:00','28 May 05:00'].forEach((s, i) => {
    const t = document.createElementNS(ns, 'text');
    t.setAttribute('x', 233 + i * 128); t.setAttribute('y', 597); t.textContent = s;
    document.getElementById('times').append(t);
  });
  const quotes = [['BTCU...','1088...','1089...',0],['AUD...','0.64...','0.64...',0],['USDC...','1.38...','1.38...',0],['NZD...','0.59...','0.59...',0],['XAUU...','3311...','3311...',0],['CADJ...','104....','104....',1],['EURA...','1.75...','1.75...',1],['EURC...','1.56...','1.56...',0],['USDC...','0.82...','0.82...',1],['GBPU...','1.34...','1.34...',0],['EURU...','1.13...','1.13...',0]];
  document.getElementById('watch').innerHTML = quotes.map(([s, b, a, up]) =>
    `<tr class="h-[30px] bg-[#f0fff0] ${up ? 'text-[#0000ff]' : 'text-[#ff0000]'}">
      <td class="border-r border-b border-[#c8c8c8] p-0 text-black"><div class="flex items-center gap-[7px]"><svg width="17" height="17"><use href="#${up ? 'up' : 'down'}" width="17" height="17"/></svg>${s}</div></td>
      <td class="border-r border-b border-[#c8c8c8] p-0 pr-1 text-right">${b}</td><td class="border-b border-[#c8c8c8] p-0 pr-[6px] text-right">${a}</td></tr>`).join('');
  const heads = ['Order','Time','Type','Size','Symbol','Price','S / L','T / P','Price','Commission','Swap','Profit'];
  document.getElementById('heads').innerHTML = heads.map((h, i) =>
    `<th class="border-r border-b border-r-[#e0e0e0] border-b-[#c8c8c8] p-0 font-normal ${i ? 'pr-1 text-right' : 'pl-1.5 text-left'}">${h}${i ? '' : '<span class="ml-3 align-top text-[10px] text-[#808080] italic">/</span>'}</th>`).join('');
  const orders = [
    ['737951475','2025.05.26 09:31:49','buy','3328.106','3276.110','3400.430','3311.621','-1 664.99'],
    ['737951643','2025.05.26 09:31:53','sell','3328.120','3380.120','3255.800','3311.781','1 650.24'],
    ['738109820','2025.05.26 12:46:41','buy','3334.213','3284.210','3404.530','3311.621','-2 281.79'],
    ['738109858','2025.05.26 12:46:43','sell','3333.524','3383.520','3263.200','3311.781','2 196.04'],
    ['740517049','2025.05.28 07:18:45','buy','3311.339','0.000','0.000','3311.621','28.48'],
    ['740517099','2025.05.28 07:18:46','sell','3311.032','0.000','0.000','3311.781','-75.65']];
  document.getElementById('orders').innerHTML = orders.map(([id, time, type, open, sl, tp, now, profit], r) => {
    const line = 'border-b border-[#c8c8c8] p-0';
    const cells = [time, type, '1.01', 'xauusdm', open, sl, tp, now, '0.00', '0.00'].map(v => `<td class="${line} border-r pr-1 text-right">${v}</td>`).join('');
    return `<tr class="h-[30px] ${r % 2 ? 'bg-white' : 'bg-[#eaeaea]'}"><td class="${line} border-r"><div class="flex items-center gap-1.5 pl-[3px]"><svg width="22" height="24" viewBox="0 0 22 24"><use href="#doc" width="22" height="24"/><circle cx="16" cy="18" r="5" fill="${type === 'buy' ? '#2a9ff0' : '#e8501e'}" stroke="${type === 'buy' ? '#1667a8' : '#a8330c'}"/></svg>${id}</div></td>${cells}<td class="${line}"><div class="flex items-center justify-end gap-3 pr-1.5">${profit}<button aria-label="Close order ${id}"><svg width="18" height="18" viewBox="0 0 18 18"><path d="M1 1l16 16M17 1L1 17" stroke="#a0a0a0" stroke-width="2"/></svg></button></div></td></tr>`;
  }).join('');
</script>
</body>
</html>
